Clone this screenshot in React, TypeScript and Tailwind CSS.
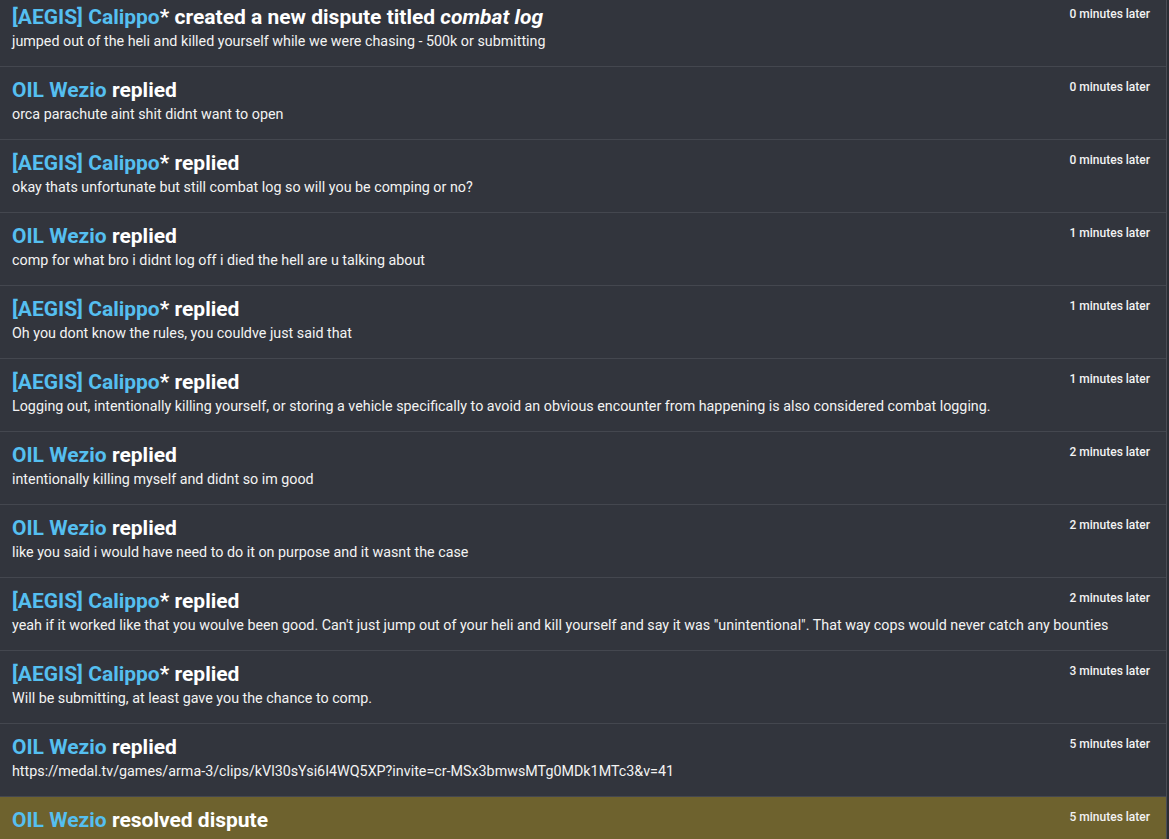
import React from "react"

type Entry = {
  who: "aegis" | "oil"
  action: React.ReactNode
  body?: string
  time: string
  resolved?: boolean
}

const entries: Entry[] = [
  {
    who: "aegis",
    action: (
      <>
        created a new dispute titled <i>combat log</i>
      </>
    ),
    body: "jumped out of the heli and killed yourself while we were chasing - 500k or submitting",
    time: "0 minutes later",
  },
  { who: "oil", action: "replied", body: "orca parachute aint shit didnt want to open", time: "0 minutes later" },
  { who: "aegis", action: "replied", body: "okay thats unfortunate but still combat log so will you be comping or no?", time: "0 minutes later" },
  { who: "oil", action: "replied", body: "comp for what bro i didnt log off i died the hell are u talking about", time: "1 minutes later" },
  { who: "aegis", action: "replied", body: "Oh you dont know the rules, you couldve just said that", time: "1 minutes later" },
  {
    who: "aegis",
    action: "replied",
    body: "Logging out, intentionally killing yourself, or storing a vehicle specifically to avoid an obvious encounter from happening is also considered combat logging.",
    time: "1 minutes later",
  },
  { who: "oil", action: "replied", body: "intentionally killing myself and didnt so im good", time: "2 minutes later" },
  { who: "oil", action: "replied", body: "like you said i would have need to do it on purpose and it wasnt the case", time: "2 minutes later" },
  {
    who: "aegis",
    action: "replied",
    body: 'yeah if it worked like that you woulve been good. Can\'t just jump out of your heli and kill yourself and say it was "unintentional". That way cops would never catch any bounties',
    time: "2 minutes later",
  },
  { who: "aegis", action: "replied", body: "Will be submitting, at least gave you the chance to comp.", time: "3 minutes later" },
  {
    who: "oil",
    action: "replied",
    body: "https://medal.tv/games/arma-3/clips/kVl30sYsi6I4WQ5XP?invite=cr-MSx3bmwsMTg0MDk1MTc3&v=41",
    time: "5 minutes later",
  },
  { who: "oil", action: "resolved dispute", time: "5 minutes later", resolved: true },
]

function Who({ who }: { who: Entry["who"] }) {
  if (who === "aegis") {
    return (
      <>
        <span className="text-[#55bff0]">[AEGIS] Calippo</span>*
      </>
    )
  }
  return <span className="text-[#55bff0]">OIL Wezio</span>
}

export default function App() {
  return (
    <div className="h-[839px] overflow-hidden bg-[#2b2d34] font-['Roboto',sans-serif]">
      <div className="w-[1167px] -mt-[6px] border-r border-[#4a4d55] bg-[#32353d]">
        {entries.map((e, i) => (
          <div
            key={i}
            className={`h-[73px] border-b border-[#44474f] pl-3 pr-4 pt-[11px] ${e.resolved ? "bg-[#6e622e]" : ""}`}
          >
            <div className="flex items-start justify-between">
              <div className="text-[21px] leading-6 font-bold text-white">
                <Who who={e.who} /> {e.action}
              </div>
              <div className="mt-[1px] shrink-0 text-[12px] leading-4 font-medium text-[#f3f3f3]">{e.time}</div>
            </div>
            {e.body && (
              <div className="mt-[2px] whitespace-nowrap text-[14.3px] leading-5 text-[#f3f3f3]">{e.body}</div>
            )}
          </div>
        ))}
      </div>
    </div>
  )
}
